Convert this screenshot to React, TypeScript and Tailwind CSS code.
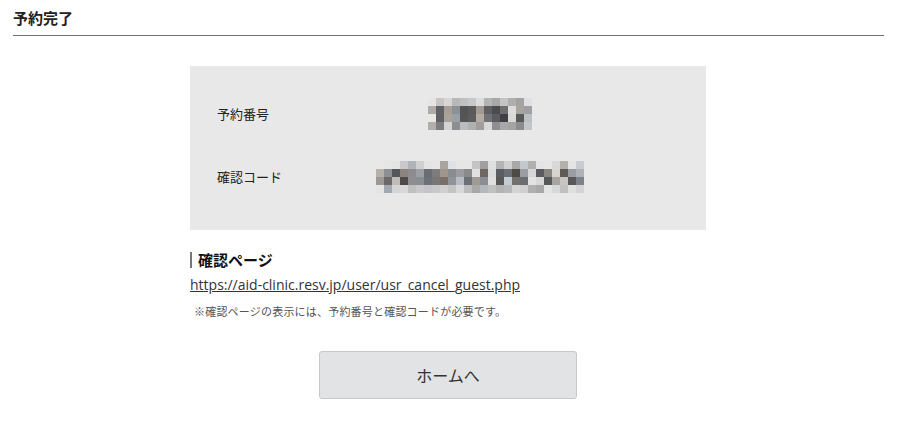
import React from "react";

const blob1: string[][] = [
  ["#e6e5e3", "#c8c6c4", "#d8d6d4", "#b8b8b8", "#c0c0c0", "#c8c8c8", "#dcdcdc", "#b4b4b4", "#a8a8aa", "#c4c4c4", "#b0aeac", "#a4a2a2", "#e0e0e0"],
  ["#b0aba6", "#5f6367", "#a89e96", "#8c9198", "#545455", "#5a5a5c", "#a29a92", "#5d5f63", "#4b4c50", "#6e6e70", "#dedcda", "#aaa4a0", "#9ea0a4"],
  ["#e8e8e4", "#5e6064", "#aca298", "#9aa0a8", "#555556", "#5c5c5c", "#b4aba2", "#6f7276", "#5a5c60", "#3f4045", "#d9d9d7", "#58595b", "#bdbfc2"],
  ["#b3aeab", "#7b7c7e", "#d4d4d4", "#8e8e90", "#b9bcc0", "#b0b0b0", "#9e9e9e", "#d9d9d9", "#8e8e8e", "#a8a8a8", "#a4a4a4", "#8c8c8e", "#c4c6c8"],
];

const blob2: string[][] = [
  ["#e8e8e6", "#e6e6e4", "#e4e4e2", "#c8c8ca", "#b0b4b8", "#d0d0d0", "#e4e4e4", "#e6e6e6", "#a8a4a0", "#dee2e6", "#e6e6e6", "#e6e6e6", "#c4c4c4", "#a0a0a0", "#e0e0e0", "#b4b4b4", "#d0d0d0", "#a8a8a8", "#c4c8cc", "#b0b0b0", "#e4e4e4", "#e6e6e6", "#d8d8d8", "#b4b0ac", "#e4e4e4", "#c8ccd0"],
  ["#b4b0aa", "#8c8e92", "#55575a", "#8c8480", "#8c8c8e", "#9ca0a4", "#6a6e74", "#7c7c7e", "#a0968c", "#8a8c90", "#9c9ca0", "#8a8a8c", "#e0e0e0", "#6e6660", "#d8dcdc", "#5a5e62", "#6c6e72", "#4e4a46", "#9a9ea2", "#d6d6d6", "#5a5c60", "#8a8680", "#d8d4d0", "#605a56", "#9a9ea4", "#aeb2b6"],
  ["#9c9894", "#6a686a", "#c0bcb8", "#4e4a48", "#8e8e90", "#8a8e92", "#6c7078", "#7a7678", "#7a7068", "#909498", "#b8bcc4", "#6e7078", "#a09a94", "#8a8e94", "#e0e0e0", "#585858", "#c4ccd2", "#74706c", "#6a6e72", "#e2e4e4", "#d8d8d8", "#56585c", "#a8a4a0", "#c8c4c0", "#585858", "#7c8288"],
  ["#e4e4e2", "#a0a8b0", "#d4d4d4", "#d8d8d8", "#c0c0c0", "#c8c8cc", "#c4c4c8", "#c8c8c8", "#d0d0d0", "#c4c4c4", "#d8d8d8", "#bcbcbc", "#a8a8a8", "#b4b8bc", "#c0c0c0", "#b4b4b4", "#b8b8b8", "#d4d4d4", "#d0d0d0", "#b0b0b0", "#a8a8a8", "#e4e4e4", "#d8d8d8", "#c0c0c0", "#e0e0e0", "#d4d4d4"],
];

function Mosaic({ cells }: { cells: string[][] }) {
  return (
    <div className="flex flex-col">
      {cells.map((row, i) => (
        <div key={i} className="flex">
          {row.map((c, j) => (
            <div key={j} className="w-[8px] h-[8px]" style={{ backgroundColor: c }} />
          ))}
        </div>
      ))}
    </div>
  );
}

export default function App() {
  return (
    <div
      className="w-[897px] h-[425px] bg-white text-[#333] overflow-hidden"
      style={{ fontFamily: '"Noto Sans CJK JP", "Noto Sans", sans-serif' }}
    >
      <div className="mx-[13px] pt-[8px] pb-[8px] border-b border-[#6e6e7c]">
        <h1 className="text-[15px] leading-[19px] font-bold text-[#222]">予約完了</h1>
      </div>

      <div className="ml-[190px] mt-[30px] w-[516px] bg-[#e9e8e8] pt-[16px] pb-[22px] pl-[27px]">
        <div className="flex items-center h-[63px]">
          <div className="w-[133px] text-[13px] text-[#222]">予約番号</div>
          <div className="w-[260px] flex justify-center">
            <Mosaic cells={blob1} />
          </div>
        </div>
        <div className="flex items-center h-[63px]">
          <div className="w-[133px] text-[13px] text-[#222]">確認コード</div>
          <div className="w-[260px] flex justify-center">
            <Mosaic cells={blob2} />
          </div>
        </div>
      </div>

      <div className="ml-[190px] mt-[22px] flex items-center h-[16px]">
        <div className="w-[2px] h-[16px] bg-[#777]" />
        <div className="ml-[6px] text-[15px] leading-[16px] font-bold text-[#111]">確認ページ</div>
      </div>

      <div className="ml-[190px] mt-[6px] h-[20px] leading-[20px] text-[14px]">
        <a
          href="#"
          className="underline text-[#333]"
          style={{ fontFamily: '"Open Sans", "Noto Sans CJK JP", sans-serif' }}
        >
          https://aid-clinic.resv.jp/user/usr_cancel_guest.php
        </a>
      </div>

      <div className="ml-[194px] mt-[9px] text-[11px] leading-[16px] text-[#555] tracking-[0.2px]">
        ※確認ページの表示には、予約番号と確認コードが必要です。
      </div>

      <div className="ml-[319px] mt-[32px] w-[258px] h-[48px] bg-[#e1e3e4] border border-[#c6c8c9] rounded-[3px] flex items-center justify-center text-[16px] text-[#333]">
        ホームへ
      </div>
    </div>
  );
}
